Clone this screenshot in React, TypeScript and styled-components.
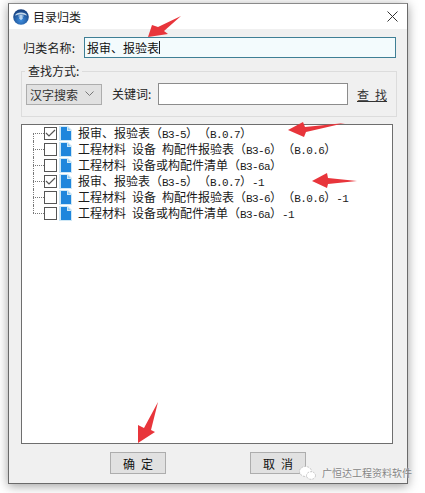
import React from "react";
import styled, { createGlobalStyle } from "styled-components";

const Global = createGlobalStyle`
  html, body { margin: 0; padding: 0; background: #fff; }
  body { width: 425px; height: 493px; overflow: hidden; position: relative; font-family: "Noto Sans CJK SC", "Liberation Sans", sans-serif; font-size: 12px; color: #1c1c1c; text-spacing-trim: space-all; }
  #root { padding: 3px 0 0 8px; }
`;
const Win = styled.div`
  width: 400px; height: 481px; box-sizing: border-box;
  border: 1px solid #6a6a6a; border-top-color: #8a8a8a; background: #f0f0f0;
  box-shadow: 0 2px 10px rgba(0,0,0,.38);
  display: flex; flex-direction: column;
`;
const TitleBar = styled.div`
  height: 25px; background: #fff; display: flex; align-items: center; padding: 0 9px 0 4px; gap: 4px; flex: none;
`;
const TitleText = styled.span`flex: 1; font-size: 12px; color: #222; line-height: 16px;`;
const Content = styled.div`
  flex: 1; display: flex; flex-direction: column; padding: 8px 11px 0 12px;
`;
const NameRow = styled.div`display: flex; align-items: center; height: 21px;`;
const Label = styled.span`white-space: nowrap; line-height: 16px; color: #222;`;
const NameLabel = styled(Label)`margin: 0 6px 0 2px; width: 55px; letter-spacing: .2px;`;
const NameInput = styled.div`
  width: 312px; height: 21px; box-sizing: border-box; border: 1px solid #3f7f95; background: #f3fbfd;
  display: flex; align-items: center; padding-left: 2px; font-size: 12px; line-height: 16px; color: #111;
`;
const Caret = styled.i`display: inline-block; width: 1px; height: 13px; background: #222;`;
const Group = styled.fieldset`
  margin: 6px 0 0 0; padding: 0 8px 0 4px; width: 376px; height: 53px; box-sizing: border-box; border: 1px solid #dcdcdc; min-width: 0;
  display: flex; align-items: flex-start;
  legend { padding: 0 3px; margin-left: -1px; line-height: 14px; height: 14px; color: #222; }
`;
const SearchRow = styled.div`display: flex; align-items: center; height: 22px; margin-top: 5px; width: 100%;`;
const Select = styled.div`
  width: 76px; height: 21px; box-sizing: border-box; background: #e1e1e1; border: 1px solid #adadad; display: flex; align-items: center; justify-content: space-between;
  padding: 0 7px 0 3px; font-size: 12px; color: #333;
`;
const KwLabel = styled(Label)`margin-left: 10px; width: 46px;`;
const KwInput = styled.div`width: 190px; height: 22px; box-sizing: border-box; border: 1px solid #8c8c8c; background: #fff;`;
const FindLink = styled.span`margin-left: 9px; text-decoration: underline; white-space: pre; color: #333; font-size: 12px;`;
const TreeBox = styled.div`
  width: 372px; height: 320px; margin: 7px 0 0 0; box-sizing: border-box; border: 1px solid #6e6e6e; background: #fff;
  padding: 0 0 0 11px; display: flex; flex-direction: column;
`;
const Row = styled.div<{ $first?: boolean; $last?: boolean }>`
  height: 16px; display: flex; align-items: center; position: relative; padding-left: 11px; flex: none;
  &::before { content: ""; position: absolute; left: 0; top: ${p => (p.$first ? "8px" : "0")}; height: ${p => (p.$last || p.$first ? "8px" : "16px")}; border-left: 1px dotted #777; }
  &::after { content: ""; position: absolute; left: 0; top: 8px; width: 11px; border-top: 1px dotted #777; }
`;
const Check = styled.span`
  width: 13px; height: 13px; box-sizing: border-box; border: 1px solid #555; background: #fff; flex: none; display: flex; align-items: center; justify-content: center;
`;
const RowText = styled.span`margin: 1px 0 0 6px; white-space: pre; font-size: 12px; line-height: 15px; color: #1a1a1a;`;
const Latin = styled.span`font-family: "Liberation Mono", monospace; font-size: 11px; letter-spacing: -.6px;`;
const Footer = styled.div`display: flex; padding: 8px 0 0 89px; gap: 84px;`;
const Btn = styled.div`
  width: 56px; height: 22px; box-sizing: border-box; background: #e1e1e1; border: 1px solid #adadad; display: flex; align-items: center; justify-content: center; white-space: pre; color: #111; font-size: 12px;
`;
const Overlay = styled.svg`position: absolute; left: 0; top: 0; pointer-events: none;`;
const Mark = styled.div`
  position: absolute; left: 299px; top: 466px; display: flex; align-items: center; gap: 6px; color: #858585; font-size: 10px; line-height: 14px; white-space: nowrap; text-shadow: 0 0 2px #fff;
`;

const DocIcon = () => (
  <svg width="13" height="15" viewBox="0 0 13 15" style={{ marginLeft: 2, flex: "none" }}>
    <path d="M0 0h9l4 4v11H0z" fill="#cfe8f6" />
    <path d="M2 1h6v4h4v9H2z" fill="#1f86dc" />
    <path d="M9 1.5 11.5 4H9z" fill="#8fc8ef" />
  </svg>
);
const Tick = () => (
  <svg width="11" height="9" viewBox="0 0 11 9"><path d="M1 4l3 3 6-6" fill="none" stroke="#555" strokeWidth="1.2" /></svg>
);

type Item = { cn: string[]; code: string; std?: string; suffix?: string; on?: boolean };
const RowLabel = ({ it }: { it: Item }) => (
  <RowText>
    {it.cn.map((part, i) => (
      <React.Fragment key={i}>
        {i > 0 && <Latin> </Latin>}
        {part}
      </React.Fragment>
    ))}
    （<Latin>{it.code}</Latin>）
    {it.std && <>（<Latin>{it.std}</Latin>）</>}
    {it.suffix && <Latin>{it.suffix}</Latin>}
  </RowText>
);
const items: Item[] = [
  { cn: ["报审、报验表"], code: "B3-5", std: "B.0.7", on: true },
  { cn: ["工程材料", "设备", "构配件报验表"], code: "B3-6", std: "B.0.6" },
  { cn: ["工程材料", "设备或构配件清单"], code: "B3-6a" },
  { cn: ["报审、报验表"], code: "B3-5", std: "B.0.7", suffix: "-1", on: true },
  { cn: ["工程材料", "设备", "构配件报验表"], code: "B3-6", std: "B.0.6", suffix: "-1" },
  { cn: ["工程材料", "设备或构配件清单"], code: "B3-6a", suffix: "-1" },
];

export default function App() {
  return (
    <>
      <Global />
      <Win>
        <TitleBar>
          <svg width="16" height="16" viewBox="0 0 16 16" style={{ flex: "none" }}>
            <defs>
              <radialGradient id="g" cx=".5" cy=".7" r=".7"><stop offset="0" stopColor="#3f8fe0" /><stop offset="1" stopColor="#123a78" /></radialGradient>
            </defs>
            <circle cx="8" cy="8" r="7.8" fill="url(#g)" />
            <path d="M2 6.5C3 2.5 13 2.5 14 6.5 11 5 5 5 2 6.5z" fill="#c4d8ea" />
            <path d="M5.5 7h5M6 9h4M8 6v5" stroke="#dfeefa" strokeWidth="1" />
          </svg>
          <TitleText>目录归类</TitleText>
          <svg width="11" height="11" viewBox="0 0 11 11" style={{ flex: "none" }}>
            <path d="M.5.5l10 10M10.5.5l-10 10" stroke="#333" strokeWidth="1" />
          </svg>
        </TitleBar>
        <Content>
          <NameRow>
            <NameLabel>归类名称:</NameLabel>
            <NameInput>报审、报验表<Caret /></NameInput>
          </NameRow>
          <Group>
            <legend>查找方式:</legend>
            <SearchRow>
              <Select>
                汉字搜索
                <svg width="9" height="6" viewBox="0 0 9 6"><path d="M.5.5l4 4 4-4" fill="none" stroke="#777" /></svg>
              </Select>
              <KwLabel>关键词:</KwLabel>
              <KwInput />
              <FindLink>查<Latin> </Latin>找</FindLink>
            </SearchRow>
          </Group>
          <TreeBox>
            {items.map((it, i) => (
              <Row key={i} $first={i === 0} $last={i === items.length - 1}>
                <Check>{it.on && <Tick />}</Check>
                <DocIcon />
                <RowLabel it={it} />
              </Row>
            ))}
          </TreeBox>
          <Footer>
            <Btn>确<Latin> </Latin>定</Btn>
            <Btn>取<Latin> </Latin>消</Btn>
          </Footer>
        </Content>
      </Win>
      <Overlay width="425" height="493" viewBox="0 0 425 493">
        <g fill="#e8353b">
          <path d="M148 37 152 25 158 27 181 16 164 31 168 34z" />
          <path d="M288 130 303 122 305 127 345 123 306 132 304 137z" />
          <path d="M312 181 327 173 328 178 357 181 328 184 327 188z" />
          <path d="M138 443 138 425 144 428 158 402 151 430 155 432z" />
        </g>
      </Overlay>
      <Mark>
        <svg width="17" height="14" viewBox="0 0 17 14">
          <ellipse cx="6.5" cy="5.5" rx="6" ry="5" fill="#fff" stroke="#bbb" strokeWidth=".8" strokeDasharray="2 1" />
          <ellipse cx="12" cy="9.5" rx="4.5" ry="3.8" fill="#fff" stroke="#bbb" strokeWidth=".8" strokeDasharray="2 1" />
        </svg>
        <span>广恒达工程资料软件</span>
      </Mark>
    </>
  );
}
